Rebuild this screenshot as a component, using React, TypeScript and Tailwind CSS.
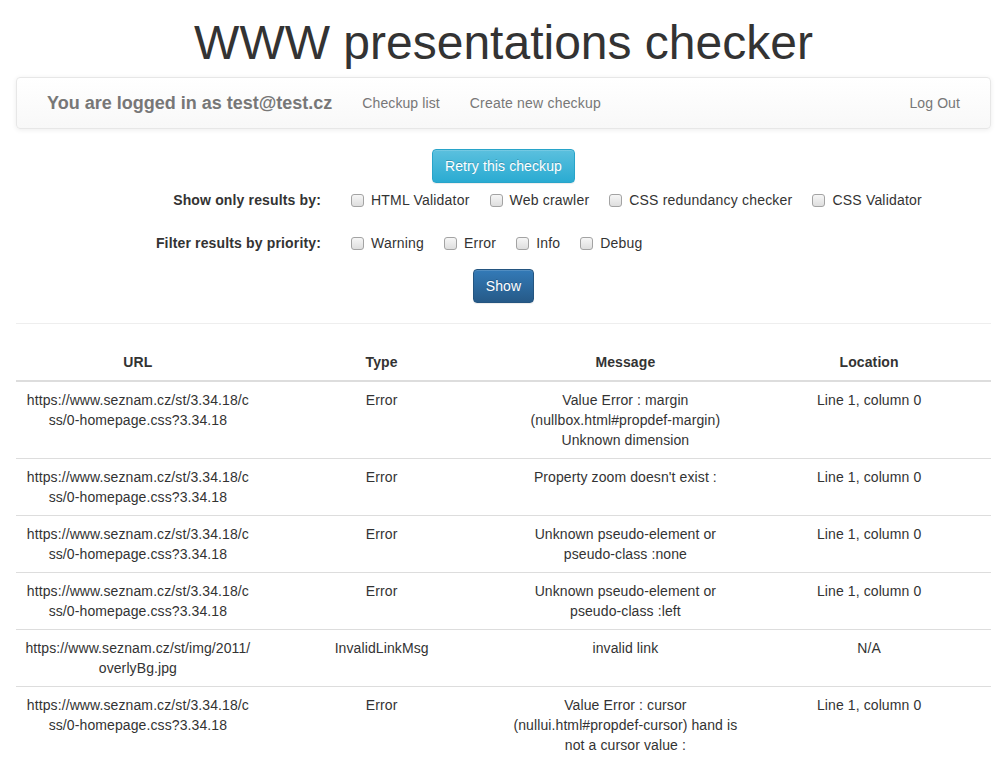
import React from 'react'

interface ResultRow {
  url: string
  type: string
  message: string
  location: string
}

const rows: ResultRow[] = [
  {
    url: 'https://www.seznam.cz/st/3.34.18/css/0-homepage.css?3.34.18',
    type: 'Error',
    message: 'Value Error : margin (nullbox.html#propdef-margin) Unknown dimension',
    location: 'Line 1, column 0',
  },
  {
    url: 'https://www.seznam.cz/st/3.34.18/css/0-homepage.css?3.34.18',
    type: 'Error',
    message: "Property zoom doesn't exist :",
    location: 'Line 1, column 0',
  },
  {
    url: 'https://www.seznam.cz/st/3.34.18/css/0-homepage.css?3.34.18',
    type: 'Error',
    message: 'Unknown pseudo-element or pseudo-class :none',
    location: 'Line 1, column 0',
  },
  {
    url: 'https://www.seznam.cz/st/3.34.18/css/0-homepage.css?3.34.18',
    type: 'Error',
    message: 'Unknown pseudo-element or pseudo-class :left',
    location: 'Line 1, column 0',
  },
  {
    url: 'https://www.seznam.cz/st/img/2011/overlyBg.jpg',
    type: 'InvalidLinkMsg',
    message: 'invalid link',
    location: 'N/A',
  },
  {
    url: 'https://www.seznam.cz/st/3.34.18/css/0-homepage.css?3.34.18',
    type: 'Error',
    message: 'Value Error : cursor (nullui.html#propdef-cursor) hand is not a cursor value :',
    location: 'Line 1, column 0',
  },
]

const validators = ['HTML Validator', 'Web crawler', 'CSS redundancy checker', 'CSS Validator']
const priorities = ['Warning', 'Error', 'Info', 'Debug']

function Check({ label }: { label: string }) {
  return (
    <label className="flex items-center mr-[20px] cursor-pointer">
      <span className="inline-block w-[13px] h-[13px] rounded-[3px] border border-[#a3a3a3] bg-[linear-gradient(to_bottom,#f6f6f6,#dedede)]" />
      <span className="ml-[7px] tracking-[0.2px]">{label}</span>
    </label>
  )
}

function FilterRow({ title, items, className }: { title: string; items: string[]; className?: string }) {
  return (
    <div className={`flex items-center h-[34px] mx-4 ${className ?? ''}`}>
      <div className="w-[305px] text-right font-bold tracking-[0.15px]">{title}</div>
      <div className="flex items-center pl-[30px]">
        {items.map(i => <Check key={i} label={i} />)}
      </div>
    </div>
  )
}

export default function App() {
  return (
    <div className="min-h-screen bg-white text-[#333] text-[14px] leading-5 tracking-[0.1px] font-['Liberation_Sans',Arial,sans-serif]">
      <h1 className="text-center text-[48px] leading-[53px] mt-[16px] mb-[8px] font-normal tracking-normal">
        WWW presentations checker
      </h1>

      {/* navbar */}
      <nav className="mx-4 h-[52px] flex items-center px-[15px] rounded border border-[#e7e7e7] bg-[linear-gradient(to_bottom,#fff_0,#f8f8f8_100%)] shadow-[inset_0_1px_0_rgba(255,255,255,.15),0_1px_5px_rgba(0,0,0,.075)] text-[#777] [text-shadow:0_1px_0_rgba(255,255,255,.25)]">
        <span className="px-[15px] text-[18px] font-bold tracking-normal">You are logged in as test@test.cz</span>
        <a className="px-[15px]">Checkup list</a>
        <a className="px-[15px] tracking-[0.2px]">Create new checkup</a>
        <a className="ml-auto px-[15px]">Log Out</a>
      </nav>

      <div className="flex justify-center mt-5">
        <button className="px-3 py-[6px] leading-5 text-white rounded border border-[#28a4c9] bg-[linear-gradient(to_bottom,#5bc0de_0,#2aabd2_100%)] [text-shadow:0_-1px_0_rgba(0,0,0,.2)] shadow-[inset_0_1px_0_rgba(255,255,255,.15),0_1px_1px_rgba(0,0,0,.075)]">
          Retry this checkup
        </button>
      </div>

      <FilterRow title="Show only results by:" items={validators} />
      <FilterRow title="Filter results by priority:" items={priorities} className="mt-[9px]" />

      <div className="flex justify-center mt-[9px]">
        <button className="px-3 py-[6px] leading-5 text-white rounded border border-[#245580] bg-[linear-gradient(to_bottom,#337ab7_0,#265a88_100%)] [text-shadow:0_-1px_0_rgba(0,0,0,.2)] shadow-[inset_0_1px_0_rgba(255,255,255,.15),0_1px_1px_rgba(0,0,0,.075)]">
          Show
        </button>
      </div>

      <hr className="mx-4 mt-5 mb-5 border-0 border-t border-[#eee]" />

      <div className="mx-4">
        <table className="w-full table-fixed border-collapse">
          <thead>
            <tr>
              <th className="p-2 font-bold text-center border-b-2 border-[#ddd]">URL</th>
              <th className="p-2 font-bold text-center border-b-2 border-[#ddd]">Type</th>
              <th className="p-2 font-bold text-center border-b-2 border-[#ddd]">Message</th>
              <th className="p-2 font-bold text-center border-b-2 border-[#ddd]">Location</th>
            </tr>
          </thead>
          <tbody>
            {rows.map((r, i) => (
              <tr key={i}>
                <td className="p-2 align-top text-center border-t border-[#ddd] break-all">{r.url}</td>
                <td className="p-2 align-top text-center border-t border-[#ddd]">{r.type}</td>
                <td className="p-2 align-top text-center border-t border-[#ddd]">{r.message}</td>
                <td className="p-2 align-top text-center border-t border-[#ddd]">{r.location}</td>
              </tr>
            ))}
          </tbody>
        </table>
      </div>
    </div>
  )
}
